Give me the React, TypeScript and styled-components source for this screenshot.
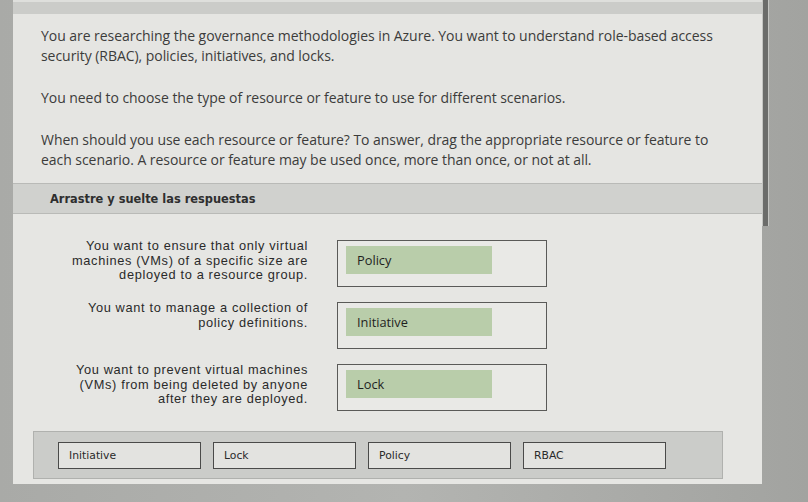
import React from "react";
import styled, { createGlobalStyle } from "styled-components";

const GlobalStyle = createGlobalStyle`
  html, body {
    margin: 0;
    padding: 0;
    background: #a7a8a5;
  }
  #root {
    width: 808px;
    height: 502px;
    overflow: hidden;
  }
`;

type Scenario = { text: string[]; answer: string };

const scenarios: Scenario[] = [
  {
    text: [
      "You want to ensure that only virtual",
      "machines (VMs) of a specific size are",
      "deployed to a resource group.",
    ],
    answer: "Policy",
  },
  {
    text: ["You want to manage a collection of", "policy definitions."],
    answer: "Initiative",
  },
  {
    text: [
      "You want to prevent virtual machines",
      "(VMs) from being deleted by anyone",
      "after they are deployed.",
    ],
    answer: "Lock",
  },
];

const options = ["Initiative", "Lock", "Policy", "RBAC"];

const App: React.FC = () => {
  return (
    <>
      <GlobalStyle />
      <Screen>
        <Panel>
          <TopStrip />
          <Intro>
            <Paragraph>
              You are researching the governance methodologies in Azure. You
              want to understand role-based access security (RBAC), policies,
              initiatives, and locks.
            </Paragraph>
            <Paragraph>
              You need to choose the type of resource or feature to use for
              different scenarios.
            </Paragraph>
            <Paragraph>
              When should you use each resource or feature? To answer, drag the
              appropriate resource or feature to each scenario. A resource or
              feature may be used once, more than once, or not at all.
            </Paragraph>
          </Intro>
          <SectionHeader>Arrastre y suelte las respuestas</SectionHeader>
          <Workspace>
            <ScenarioList>
              {scenarios.map((s) => (
                <ScenarioRow key={s.answer}>
                  <ScenarioText>
                    {s.text.map((line) => (
                      <div key={line}>{line}</div>
                    ))}
                  </ScenarioText>
                  <DropZone>
                    <Answer>{s.answer}</Answer>
                  </DropZone>
                </ScenarioRow>
              ))}
            </ScenarioList>
            <Bank>
              {options.map((o) => (
                <Option key={o}>{o}</Option>
              ))}
            </Bank>
          </Workspace>
        </Panel>
        <Gutter>
          <ScrollThumb />
        </Gutter>
      </Screen>
    </>
  );
};

export default App;

const Screen = styled.div`
  display: flex;
  align-items: flex-start;
  width: 808px;
  height: 502px;
  padding-left: 13px;
  box-sizing: border-box;
  background: linear-gradient(90deg, #a9aaa7 0%, #b3b4b1 50%, #a2a3a0 100%);
`;

const Panel = styled.div`
  width: 749px;
  display: flex;
  flex-direction: column;
  background: #e5e5e2;
`;

const TopStrip = styled.div`
  height: 12px;
  background: #cbccc9;
  border-top: 2px solid #dedfdc;
`;

const Intro = styled.div`
  display: flex;
  flex-direction: column;
  gap: 22px;
  padding: 12px 30px 13px 28px;
`;

const Paragraph = styled.p`
  margin: 0;
  font-family: "Open Sans", "Noto Sans", sans-serif;
  font-size: 14px;
  line-height: 20px;
  letter-spacing: -0.05px;
  color: #3c3c3b;
`;

const SectionHeader = styled.div`
  height: 29px;
  display: flex;
  align-items: center;
  padding-left: 37px;
  background: #d0d1ce;
  border-top: 1px solid #b9bab7;
  border-bottom: 1px solid #b9bab7;
  font-family: "DejaVu Sans", Verdana, sans-serif;
  font-size: 11.4px;
  font-weight: 700;
  color: #2e2e2e;
`;

const Workspace = styled.div`
  display: flex;
  flex-direction: column;
  gap: 20px;
  padding: 26px 0 5px 20px;
  background: #e6e6e3;
`;

const ScenarioList = styled.div`
  display: flex;
  flex-direction: column;
  gap: 15px;
`;

const ScenarioRow = styled.div`
  display: grid;
  grid-template-columns: 275px 210px;
  column-gap: 29px;
  align-items: start;
`;

const ScenarioText = styled.div`
  text-align: right;
  margin-top: -1px;
  font-family: "Liberation Sans", Arial, sans-serif;
  font-size: 12.8px;
  line-height: 14.5px;
  letter-spacing: 0.65px;
  color: #2a2a2a;
`;

const DropZone = styled.div`
  height: 47px;
  padding: 5px 0 0 8px;
  box-sizing: border-box;
  border: 1px solid #5a5a58;
  background: #e9e9e6;
`;

const Answer = styled.div`
  width: 146px;
  height: 28px;
  display: flex;
  align-items: center;
  padding-left: 11px;
  box-sizing: border-box;
  background: #b9cdaa;
  font-family: "Open Sans", "Noto Sans", sans-serif;
  font-size: 12.8px;
  color: #1f1f1f;
`;

const Bank = styled.div`
  width: 690px;
  height: 48px;
  display: flex;
  align-items: center;
  gap: 12px;
  padding-left: 24px;
  box-sizing: border-box;
  background: #cbccc9;
  border: 1px solid #b0b1ae;
`;

const Option = styled.div`
  width: 143px;
  height: 27px;
  display: flex;
  align-items: center;
  padding-left: 10px;
  box-sizing: border-box;
  border: 1.5px solid #4a4a49;
  background: #e3e3e0;
  font-family: "DejaVu Sans", Verdana, sans-serif;
  font-size: 10.8px;
  color: #2a2a2a;
`;

const Gutter = styled.div`
  width: 6px;
  height: 226px;
  padding-left: 1px;
  background: #c4c5c2;
`;

const ScrollThumb = styled.div`
  width: 5px;
  height: 100%;
  background: #6b6c6a;
`;
